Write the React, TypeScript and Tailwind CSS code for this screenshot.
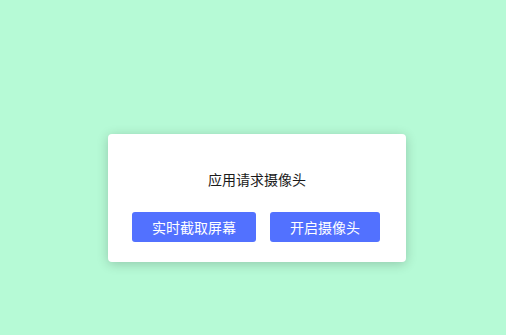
import React from "react";

export default function App() {
  return (
    <div
      className="w-[506px] h-[335px] bg-[#b6fad6] pt-[134px] pl-[108px]"
      style={{ fontFamily: '"Noto Sans CJK SC", "Noto Sans", sans-serif' }}
    >
      <div className="w-[298px] h-[128px] bg-white rounded-[4px] shadow-[0_2px_12px_rgba(0,0,0,0.2)] flex flex-col items-center pt-[35px]">
        <div className="text-[14px] leading-[20px] text-[#1a1a1a]">应用请求摄像头</div>
        <div className="flex gap-[14px] mt-[23px] mr-[2px]">
          <button className="h-[30px] px-5 rounded-[3px] bg-[#5271ff] text-white text-[14px] leading-[30px]">
            实时截取屏幕
          </button>
          <button className="h-[30px] px-5 rounded-[3px] bg-[#5271ff] text-white text-[14px] leading-[30px]">
            开启摄像头
          </button>
        </div>
      </div>
    </div>
  );
}
